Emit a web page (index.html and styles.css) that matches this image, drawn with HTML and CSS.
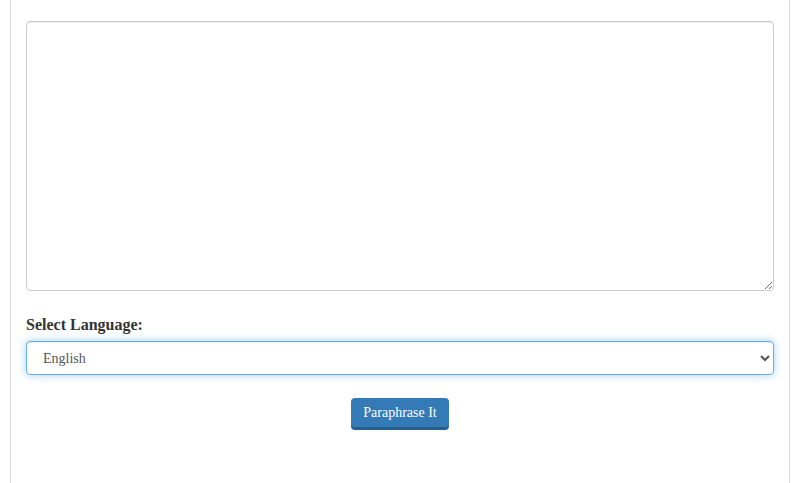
FILE: index.html
```html
<!DOCTYPE html>
<html>
<head>
    <title>Paraphrase</title>
    <link rel="stylesheet" href="styles.css">
</head>
<body>
    <div class="wrap">
        <textarea class="text-box"></textarea>

        <label class="lang-label" for="lang">Select Language:</label>
        <select id="lang" class="lang-select">
            <option>English</option>
        </select>

        <div class="actions">
            <button class="btn-go">Paraphrase It</button>
        </div>
    </div>
</body>
</html>
```

FILE: styles.css
```css
body {
    margin: 0;
    padding: 0;
    background-color: #fff;
    font-family: "Liberation Serif", "Times New Roman", serif;
    color: #333;
}

.wrap {
    margin-left: 10px;
    width: 780px;
    min-height: 483px;
    box-sizing: border-box;
    border-left: 1px solid #ddd;
    border-right: 1px solid #ddd;
    padding: 21px 15px 0 15px;
    display: flex;
    flex-direction: column;
}

.text-box {
    display: block;
    width: 100%;
    height: 270px;
    box-sizing: border-box;
    border: 1px solid #ccc;
    border-radius: 4px;
    box-shadow: inset 0 1px 1px rgba(0, 0, 0, .075);
    padding: 6px 12px;
    font-family: inherit;
    font-size: 14px;
    margin: 0;
}

.lang-label {
    font-weight: bold;
    font-size: 16px;
    margin-top: 25px;
    margin-bottom: 7px;
    color: #333;
}

.lang-select {
    display: block;
    width: 100%;
    height: 34px;
    box-sizing: border-box;
    padding: 6px 12px;
    font-family: inherit;
    font-size: 14px;
    color: #555;
    background-color: #fff;
    border: 1px solid #66afe9;
    border-radius: 4px;
    outline: 0;
    box-shadow: inset 0 1px 1px rgba(0, 0, 0, .075), 0 0 8px rgba(102, 175, 233, .6);
}

.actions {
    text-align: center;
    margin-top: 23px;
}

.btn-go {
    font-family: inherit;
    font-size: 14px;
    color: #fff;
    background-color: #337ab7;
    border: 0;
    border-bottom: 3px solid #285e8e;
    border-radius: 4px;
    padding: 7px 12px 6px 12px;
    height: 32px;
}
```
